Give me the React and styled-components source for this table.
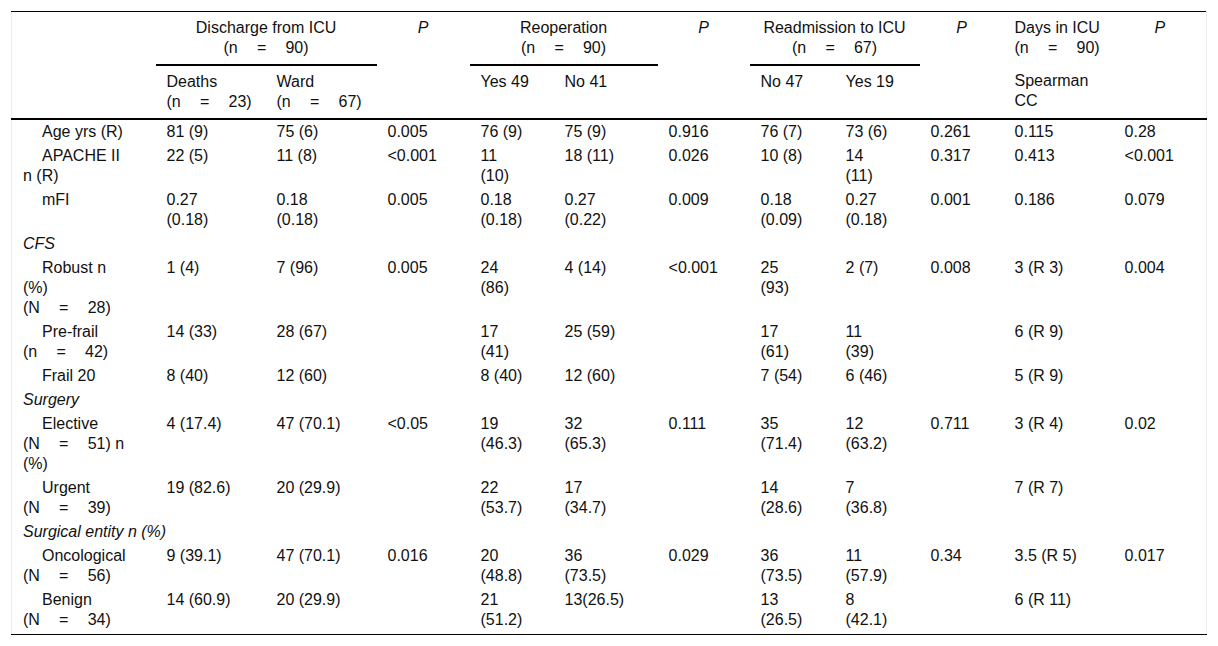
import React from 'react'
import styled, { createGlobalStyle } from 'styled-components'

const GlobalStyle = createGlobalStyle`
    body{
        margin:0;
        background:#fff;
        font-family:"Liberation Sans", Arial, sans-serif;
        color:#111;
    }
`;

const Wrapper = styled.div`
    padding:11px;
`;

const Table = styled.table`
    width:1196px;
    table-layout:fixed;
    border-collapse:collapse;
    border-top:1px solid #000;
    border-bottom:1px solid #000;
    border-left:1px solid #ececec;
    border-right:1px solid #ececec;
    font-size:16px;
    line-height:20px;
`;

const Head = styled.thead`
    border-bottom:2px solid #000;
`;

const Th = styled.th`
    font-weight:normal;
    text-align:${({ $center }) => $center ? 'center' : 'left'};
    vertical-align:top;
    padding:6px 11px 6px;
    white-space:pre;
    border-bottom:${({ $rule }) => $rule ? '2px solid #000' : 'none'};
`;

const PHead = styled(Th)`
    font-style:italic;
    text-align:center;
`;

const Td = styled.td`
    vertical-align:top;
    padding:2px 11px;
    white-space:pre;
    tr:last-child > &{
        padding-bottom:4px;
    }
`;

const Label = styled(Td)`
    text-indent:19px;
`;

const Section = styled(Td)`
    font-style:italic;
`;

const eq = '\u2003\u2009=\u2003\u2009';
const n = (k, v) => `(${k}${eq}${v})`;

const widths = [144, 110, 111, 93, 84, 104, 92, 85, 85, 84, 110, 93];

const rows = [
    { label: 'Age yrs (R)', cells: ['81 (9)', '75 (6)', '0.005', '76 (9)', '75 (9)', '0.916', '76 (7)', '73 (6)', '0.261', '0.115', '0.28'] },
    { label: 'APACHE II\nn (R)', cells: ['22 (5)', '11 (8)', '<0.001', '11\n(10)', '18 (11)', '0.026', '10 (8)', '14\n(11)', '0.317', '0.413', '<0.001'] },
    { label: 'mFI', cells: ['0.27\n(0.18)', '0.18\n(0.18)', '0.005', '0.18\n(0.18)', '0.27\n(0.22)', '0.009', '0.18\n(0.09)', '0.27\n(0.18)', '0.001', '0.186', '0.079'] },
    { section: 'CFS' },
    { label: `Robust n\n(%)\n${n('N', 28)}`, cells: ['1 (4)', '7 (96)', '0.005', '24\n(86)', '4 (14)', '<0.001', '25\n(93)', '2 (7)', '0.008', '3 (R 3)', '0.004'] },
    { label: `Pre-frail\n${n('n', 42)}`, cells: ['14 (33)', '28 (67)', '', '17\n(41)', '25 (59)', '', '17\n(61)', '11\n(39)', '', '6 (R 9)', ''] },
    { label: 'Frail 20', cells: ['8 (40)', '12 (60)', '', '8 (40)', '12 (60)', '', '7 (54)', '6 (46)', '', '5 (R 9)', ''] },
    { section: 'Surgery' },
    { label: `Elective\n${n('N', 51)} n\n(%)`, cells: ['4 (17.4)', '47 (70.1)', '<0.05', '19\n(46.3)', '32\n(65.3)', '0.111', '35\n(71.4)', '12\n(63.2)', '0.711', '3 (R 4)', '0.02'] },
    { label: `Urgent\n${n('N', 39)}`, cells: ['19 (82.6)', '20 (29.9)', '', '22\n(53.7)', '17\n(34.7)', '', '14\n(28.6)', '7\n(36.8)', '', '7 (R 7)', ''] },
    { section: 'Surgical entity n (%)' },
    { label: `Oncological\n${n('N', 56)}`, cells: ['9 (39.1)', '47 (70.1)', '0.016', '20\n(48.8)', '36\n(73.5)', '0.029', '36\n(73.5)', '11\n(57.9)', '0.34', '3.5 (R 5)', '0.017'] },
    { label: `Benign\n${n('N', 34)}`, cells: ['14 (60.9)', '20 (29.9)', '', '21\n(51.2)', '13(26.5)', '', '13\n(26.5)', '8\n(42.1)', '', '6 (R 11)', ''] },
];

export default function App() {
    return (
        <Wrapper>
            <GlobalStyle />
            <Table>
                <colgroup>
                    {widths.map((w, i) => <col key={i} style={{ width: w }} />)}
                </colgroup>
                <Head>
                    <tr>
                        <Th rowSpan={2}></Th>
                        <Th colSpan={2} $center $rule>{`Discharge from ICU\n${n('n', 90)}`}</Th>
                        <PHead rowSpan={2}>P</PHead>
                        <Th colSpan={2} $center $rule>{`Reoperation\n${n('n', 90)}`}</Th>
                        <PHead rowSpan={2}>P</PHead>
                        <Th colSpan={2} $center $rule>{`Readmission to ICU\n${n('n', 67)}`}</Th>
                        <PHead rowSpan={2}>P</PHead>
                        <Th>{`Days in ICU\n${n('n', 90)}`}</Th>
                        <PHead rowSpan={2}>P</PHead>
                    </tr>
                    <tr>
                        <Th>{`Deaths\n${n('n', 23)}`}</Th>
                        <Th>{`Ward\n${n('n', 67)}`}</Th>
                        <Th>Yes 49</Th>
                        <Th>No 41</Th>
                        <Th>No 47</Th>
                        <Th>Yes 19</Th>
                        <Th>{'Spearman\nCC'}</Th>
                    </tr>
                </Head>
                <tbody>
                    {rows.map((row, i) => row.section
                        ? <tr key={i}><Section colSpan={12}>{row.section}</Section></tr>
                        : <tr key={i}>
                            <Label>{row.label}</Label>
                            {row.cells.map((c, j) => <Td key={j}>{c}</Td>)}
                        </tr>
                    )}
                </tbody>
            </Table>
        </Wrapper>
    )
}
